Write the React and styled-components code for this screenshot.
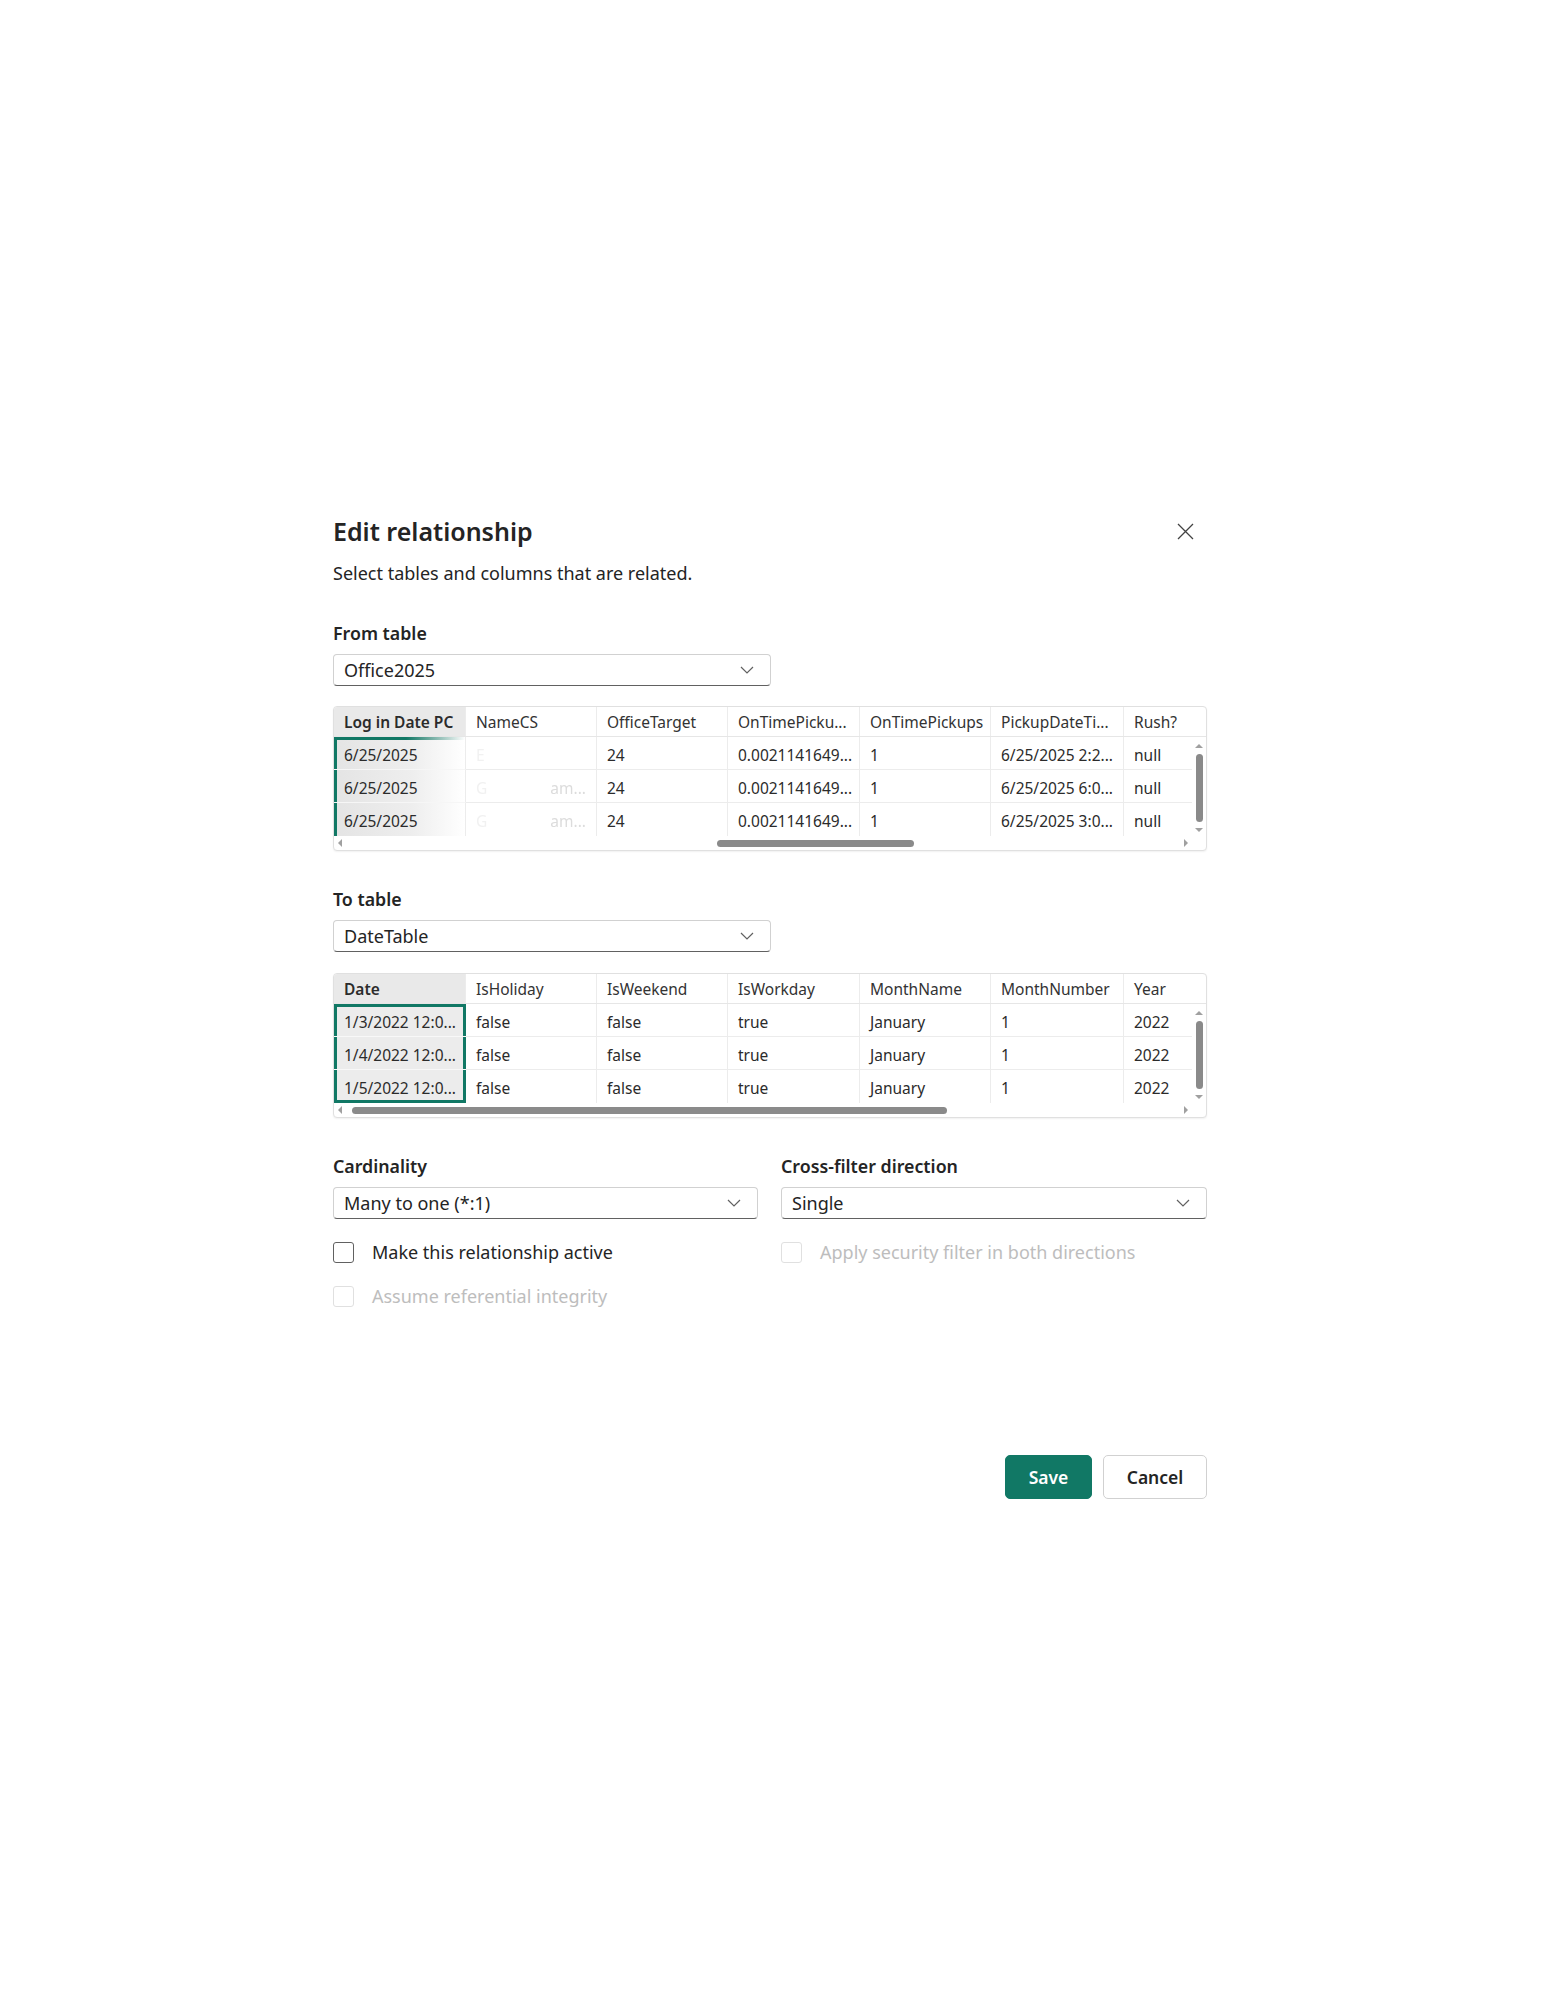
import React from "react";
import styled, { createGlobalStyle, css } from "styled-components";

const GREEN = "#117865";
const COLS = "132px 131px 131px 132px 131px 133px 1fr";

const GlobalStyle = createGlobalStyle`
  html, body {
    margin: 0;
    padding: 0;
    background: #ffffff;
  }
  body {
    font-family: "Noto Sans", "Open Sans", Arial, sans-serif;
    color: #242424;
  }
  * {
    box-sizing: border-box;
  }
`;

const Page = styled.div`
  min-height: 2000px;
  padding: 513px 0 0 333px;
`;

const Dialog = styled.div`
  width: 874px;
  display: flex;
  flex-direction: column;
`;

const Header = styled.div`
  display: flex;
  align-items: center;
  justify-content: space-between;
  height: 36px;
`;

const Title = styled.h1`
  margin: 0;
  font-size: 25px;
  font-weight: 600;
  line-height: 36px;
  color: #242424;
`;

const CloseButton = styled.button`
  width: 32px;
  height: 32px;
  margin-right: 6px;
  padding: 0;
  border: none;
  background: transparent;
  display: flex;
  align-items: center;
  justify-content: center;
`;

const Subtitle = styled.p`
  margin: 12px 0 0;
  font-size: 18px;
  line-height: 24px;
  color: #242424;
`;

const FieldLabel = styled.div`
  margin-top: ${(p) => p.$top || 36}px;
  font-size: 17.8px;
  font-weight: 600;
  line-height: 24px;
  color: #242424;
`;

const DropdownBox = styled.div`
  margin-top: 9px;
  width: ${(p) => p.$width || "100%"};
  height: 32px;
  padding: 0 16px 0 10px;
  display: flex;
  align-items: center;
  justify-content: space-between;
  border: 1px solid #d1d1d1;
  border-bottom-color: #616161;
  border-radius: 4px;
  background: #ffffff;
  font-size: 18px;
  color: #242424;
`;

const TableFrame = styled.div`
  border: 1px solid #e0e0e0;
  border-radius: 4px;
  overflow: hidden;
  background: #ffffff;
  box-shadow: 0 1px 2px rgba(0, 0, 0, 0.06);
  font-size: 15.5px;
`;

const HeadRow = styled.div`
  display: grid;
  grid-template-columns: ${COLS};
  height: 30px;
  border-bottom: 1px solid #e6e6e6;
`;

const HeadCell = styled.div`
  padding: 0 10px;
  display: flex;
  align-items: center;
  white-space: nowrap;
  overflow: hidden;
  color: #333333;
  border-right: 1px solid #ececec;
  &:last-child {
    border-right: none;
  }
  ${(p) =>
    p.$key &&
    css`
      background: #e9e9e9;
      font-weight: 600;
      color: #2b2b2b;
    `}
`;

const Body = styled.div`
  display: flex;
`;

const Rows = styled.div`
  flex: 1;
  display: flex;
  flex-direction: column;
`;

const Row = styled.div`
  display: grid;
  grid-template-columns: ${COLS};
  height: 33px;
`;

const Cell = styled.div`
  padding: 3px 10px 0;
  display: flex;
  align-items: center;
  justify-content: space-between;
  white-space: nowrap;
  overflow: hidden;
  color: #2b2b2b;
  border-right: 1px solid #ececec;
  border-bottom: ${(p) => (p.$lastRow ? "none" : "1px solid #ececec")};
  &:last-child {
    border-right: none;
  }
  ${(p) =>
    p.$mode === "fade" &&
    css`
      border-bottom-color: #f6f6f6;
      background: ${p.$firstRow
          ? `linear-gradient(90deg, ${GREEN} 0%, ${GREEN} 55%, rgba(17,120,101,0) 100%) top left / 100% 3px no-repeat,`
          : ""}
        linear-gradient(90deg, #e4e4e4 0%, #eeeeee 60%, #ffffff 100%);
      box-shadow: inset 3px 0 0 ${GREEN};
    `}
  ${(p) =>
    p.$mode === "box" &&
    css`
      background: #ececec;
      border-bottom-color: #f8f8f8;
      border-right: none;
      box-shadow: inset 3px 0 0 ${GREEN}, inset -3px 0 0 ${GREEN}
        ${p.$firstRow ? `, inset 0 3px 0 ${GREEN}` : ""}
        ${p.$lastRow ? `, inset 0 -3px 0 ${GREEN}` : ""};
    `}
`;

const Faint = styled.span`
  color: ${(p) => (p.$soft ? "#dcdcdc" : "#f1f1f1")};
  filter: blur(0.6px);
`;

const VScroll = styled.div`
  width: 14px;
  display: flex;
  flex-direction: column;
  align-items: center;
  padding: 7px 0 4px;
`;

const ArrowUp = styled.span`
  width: 0;
  height: 0;
  border-left: 4px solid transparent;
  border-right: 4px solid transparent;
  border-bottom: 4px solid #a0a0a0;
`;

const ArrowDown = styled(ArrowUp)`
  border-bottom: none;
  border-top: 4px solid #a0a0a0;
`;

const VThumb = styled.div`
  flex: 1;
  width: 7px;
  margin: 6px 0;
  border-radius: 4px;
  background: #8a8a8a;
`;

const HScroll = styled.div`
  height: 14px;
  display: flex;
  align-items: center;
  padding-left: 4px;
`;

const ArrowLeft = styled.span`
  width: 0;
  height: 0;
  border-top: 4px solid transparent;
  border-bottom: 4px solid transparent;
  border-right: 4px solid #a0a0a0;
`;

const ArrowRight = styled.span`
  width: 0;
  height: 0;
  border-top: 4px solid transparent;
  border-bottom: 4px solid transparent;
  border-left: 4px solid #a0a0a0;
`;

const Track = styled.div`
  flex: 1;
  height: 7px;
  margin: 0 6px;
  position: relative;
`;

const HThumb = styled.div`
  position: absolute;
  top: 0;
  height: 7px;
  border-radius: 4px;
  background: #8a8a8a;
`;

const Corner = styled.div`
  width: 18px;
`;

const TableSlot = styled.div`
  margin-top: ${(p) => p.$top}px;
`;

const BottomGrid = styled.div`
  display: grid;
  grid-template-columns: 425px 426px;
  column-gap: 23px;
`;

const Column = styled.div`
  display: flex;
  flex-direction: column;
`;

const CheckRow = styled.label`
  margin-top: ${(p) => p.$top}px;
  height: 32px;
  display: flex;
  align-items: center;
  gap: 18px;
  font-size: 18px;
  color: ${(p) => (p.$disabled ? "#bdbdbd" : "#242424")};
`;

const Box = styled.span`
  width: 21px;
  height: 21px;
  border-radius: 3px;
  border: 1px solid ${(p) => (p.$disabled ? "#e0e0e0" : "#616161")};
  background: #ffffff;
  flex-shrink: 0;
`;

const Footer = styled.div`
  margin-top: 143px;
  display: flex;
  justify-content: flex-end;
  gap: 11px;
`;

const Button = styled.button`
  height: 44px;
  width: ${(p) => p.$width}px;
  border-radius: 5px;
  font-family: inherit;
  font-size: 17.5px;
  font-weight: 600;
  border: 1px solid ${(p) => (p.$primary ? GREEN : "#d1d1d1")};
  background: ${(p) => (p.$primary ? GREEN : "#ffffff")};
  color: ${(p) => (p.$primary ? "#ffffff" : "#242424")};
`;

function Chevron() {
  return (
    <svg width="14" height="8" viewBox="0 0 14 8" fill="none">
      <polyline points="1,1 7,7 13,1" stroke="#616161" strokeWidth="1.2" />
    </svg>
  );
}

function Dropdown({ value, width }) {
  return (
    <DropdownBox $width={width}>
      <span>{value}</span>
      <Chevron />
    </DropdownBox>
  );
}

function Checkbox({ label, disabled, top }) {
  return (
    <CheckRow $disabled={disabled} $top={top}>
      <Box $disabled={disabled} />
      {label}
    </CheckRow>
  );
}

function DataTable({ headers, rows, mode, thumb, top }) {
  return (
    <TableSlot $top={top}>
      <TableFrame>
        <HeadRow>
          {headers.map((h, i) => (
            <HeadCell key={h} $key={i === 0}>
              {h}
            </HeadCell>
          ))}
        </HeadRow>
        <Body>
          <Rows>
            {rows.map((r, ri) => (
              <Row key={ri}>
                {r.map((c, ci) => (
                  <Cell
                    key={ci}
                    $mode={ci === 0 ? mode : undefined}
                    $firstRow={ri === 0}
                    $lastRow={ri === rows.length - 1}
                  >
                    {c}
                  </Cell>
                ))}
              </Row>
            ))}
          </Rows>
          <VScroll>
            <ArrowUp />
            <VThumb />
            <ArrowDown />
          </VScroll>
        </Body>
        <HScroll>
          <ArrowLeft />
          <Track>
            <HThumb style={{ left: `${thumb[0]}%`, width: `${thumb[1]}%` }} />
          </Track>
          <ArrowRight />
          <Corner />
        </HScroll>
      </TableFrame>
    </TableSlot>
  );
}

const fromHeaders = [
  "Log in Date PC",
  "NameCS",
  "OfficeTarget",
  "OnTimePicku...",
  "OnTimePickups",
  "PickupDateTi...",
  "Rush?",
];

const fromRows = [
  ["6/25/2025", <Faint key="a">E</Faint>, "24", "0.0021141649...", "1", "6/25/2025 2:2...", "null"],
  [
    "6/25/2025",
    <>
      <Faint>G</Faint>
      <Faint $soft>am...</Faint>
    </>,
    "24",
    "0.0021141649...",
    "1",
    "6/25/2025 6:0...",
    "null",
  ],
  [
    "6/25/2025",
    <>
      <Faint>G</Faint>
      <Faint $soft>am...</Faint>
    </>,
    "24",
    "0.0021141649...",
    "1",
    "6/25/2025 3:0...",
    "null",
  ],
];

const toHeaders = ["Date", "IsHoliday", "IsWeekend", "IsWorkday", "MonthName", "MonthNumber", "Year"];

const toRows = [
  ["1/3/2022 12:0...", "false", "false", "true", "January", "1", "2022"],
  ["1/4/2022 12:0...", "false", "false", "true", "January", "1", "2022"],
  ["1/5/2022 12:0...", "false", "false", "true", "January", "1", "2022"],
];

export default function App() {
  return (
    <>
      <GlobalStyle />
      <Page>
        <Dialog>
          <Header>
            <Title>Edit relationship</Title>
            <CloseButton aria-label="Close">
              <svg width="17" height="17" viewBox="0 0 17 17">
                <path d="M1 1 L16 16 M16 1 L1 16" stroke="#424242" strokeWidth="1.3" />
              </svg>
            </CloseButton>
          </Header>
          <Subtitle>Select tables and columns that are related.</Subtitle>

          <FieldLabel>From table</FieldLabel>
          <Dropdown value="Office2025" width="438px" />
          <DataTable headers={fromHeaders} rows={fromRows} mode="fade" thumb={[44.4, 23.8]} top={20} />

          <FieldLabel>To table</FieldLabel>
          <Dropdown value="DateTable" width="438px" />
          <DataTable headers={toHeaders} rows={toRows} mode="box" thumb={[0.5, 71.7]} top={21} />

          <BottomGrid>
            <Column>
              <FieldLabel>Cardinality</FieldLabel>
              <Dropdown value="Many to one (*:1)" />
              <Checkbox label="Make this relationship active" top={17} />
              <Checkbox label="Assume referential integrity" disabled top={12} />
            </Column>
            <Column>
              <FieldLabel>Cross-filter direction</FieldLabel>
              <Dropdown value="Single" />
              <Checkbox label="Apply security filter in both directions" disabled top={17} />
            </Column>
          </BottomGrid>

          <Footer>
            <Button $primary $width={87}>
              Save
            </Button>
            <Button $width={104}>Cancel</Button>
          </Footer>
        </Dialog>
      </Page>
    </>
  );
}
